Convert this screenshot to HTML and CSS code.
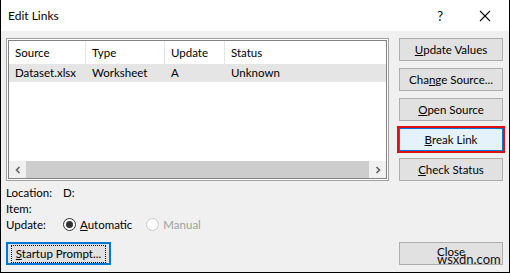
FILE: index.html
```html
<!DOCTYPE html>
<html lang="en">
<head>
  <meta charset="UTF-8">
  <title>Edit Links</title>
  <link rel="stylesheet" href="styles.css">
</head>
<body>
  <div class="dialog">
    <div class="titleBar">
      <span class="title">Edit Links</span>
      <span class="help">?</span>
      <svg class="closeX" width="12" height="12" viewBox="0 0 12 12">
        <path d="M1 1 L11 11 M11 1 L1 11" stroke="#000" stroke-width="1.1" fill="none"/>
      </svg>
    </div>

    <div class="content">
      <div class="topRow">
        <div class="linkList">
          <div class="listInner">
            <div class="listHeader">
              <div class="col colSource">Source</div>
              <div class="col colType">Type</div>
              <div class="col colUpdate">Update</div>
              <div class="col colStatus">Status</div>
            </div>
            <div class="listRow">
              <div class="col colSource">Dataset.xlsx</div>
              <div class="col colType">Worksheet</div>
              <div class="col colUpdate">A</div>
              <div class="col colStatus">Unknown</div>
            </div>
            <div class="listEmpty"></div>
            <div class="hScroll">
              <div class="arrow">
                <svg width="8" height="8" viewBox="0 0 8 8"><path d="M5.5 1 L2.5 4 L5.5 7" stroke="#606060" stroke-width="1.6" fill="none"/></svg>
              </div>
              <div class="thumb"></div>
              <div class="arrow">
                <svg width="8" height="8" viewBox="0 0 8 8"><path d="M2.5 1 L5.5 4 L2.5 7" stroke="#606060" stroke-width="1.6" fill="none"/></svg>
              </div>
            </div>
          </div>
        </div>

        <div class="sideButtons">
          <button class="btn"><u>U</u>pdate Values</button>
          <button class="btn">Cha<u>n</u>ge Source...</button>
          <button class="btn"><u>O</u>pen Source</button>
          <button class="btn btnHot"><u>B</u>reak Link</button>
          <button class="btn"><u>C</u>heck Status</button>
        </div>
      </div>

      <div class="info">
        <div class="infoLine"><span class="label">Location:</span><span>D:</span></div>
        <div class="infoLine"><span class="label">Item:</span></div>
        <div class="infoLine">
          <span class="label">Update:</span>
          <span class="radio on"></span><span class="radioText"><u>A</u>utomatic</span>
          <span class="radio off"></span><span class="radioText disabled">Manual</span>
        </div>
      </div>

      <div class="bottomRow">
        <button class="btn btnFocus"><span class="focusRect"><u>S</u>tartup Prompt...</span></button>
        <button class="btn btnClose"><span class="closeText">Close</span><span class="watermark">wsxdn.com</span></button>
      </div>
    </div>
  </div>
</body>
</html>
```

FILE: styles.css
```css
body {
  margin: 0;
  font-family: Lato, "Noto Sans", sans-serif;
  font-size: 11.5px;
  color: #000;
}

.dialog {
  width: 510px;
  height: 273px;
  box-sizing: border-box;
  border: 1px solid #000;
  border-top: none;
  background: #f0f0f0;
  display: flex;
  flex-direction: column;
}

.titleBar {
  height: 31px;
  background: #fff;
  display: flex;
  align-items: center;
  padding-left: 7px;
  font-size: 12px;
}

.title {
  flex: 1;
}

.help {
  margin-right: 36px;
  font-size: 13px;
}

.closeX {
  margin-right: 18px;
}

.content {
  flex: 1;
  padding: 7px 6px 0 5px;
  display: flex;
  flex-direction: column;
}

.topRow {
  display: flex;
  gap: 10px;
}

.linkList {
  width: 384px;
  height: 143px;
  box-sizing: border-box;
  border: 1px solid #a0a0a0;
  padding: 1px;
  background: #fff;
}

.listInner {
  height: 100%;
  box-sizing: border-box;
  border: 1px solid #828282;
  display: flex;
  flex-direction: column;
}

.listHeader,
.listRow {
  display: flex;
}

.listHeader {
  height: 23px;
  align-items: center;
}

.listHeader .col {
  height: 23px;
  line-height: 23px;
  border-right: 1px solid #e5e5e5;
}

.listHeader .colStatus {
  border-right: none;
}

.listRow {
  height: 18px;
  line-height: 18px;
  background: #e5e5e5;
}

.col {
  box-sizing: border-box;
  padding-left: 6px;
  white-space: nowrap;
}

.colSource { width: 77px; }
.colType { width: 79px; }
.colUpdate { width: 60px; }
.colStatus { flex: 1; }

.listEmpty {
  flex: 1;
}

.hScroll {
  height: 17px;
  display: flex;
  background: #f0f0f0;
}

.hScroll .arrow {
  width: 17px;
  display: flex;
  align-items: center;
  justify-content: center;
}

.hScroll .thumb {
  flex: 1;
  background: #cdcdcd;
}

.sideButtons {
  display: flex;
  flex-direction: column;
  gap: 7px;
}

.btn {
  font-family: inherit;
  font-size: 11.5px;
  color: #000;
  width: 104px;
  height: 23px;
  padding: 0;
  background: #e1e1e1;
  border: 1px solid #adadad;
  box-sizing: border-box;
  display: flex;
  align-items: center;
  justify-content: center;
  white-space: nowrap;
}

.btnHot {
  background: #e5f1fb;
  border: 1px solid #0078d7;
  outline: 2px solid #e01010;
}

.info {
  padding-top: 3px;
  display: flex;
  flex-direction: column;
}

.infoLine {
  height: 16px;
  display: flex;
  align-items: center;
}

.label {
  width: 57px;
}

.radio {
  width: 13px;
  height: 13px;
  box-sizing: border-box;
  border-radius: 50%;
  margin-right: 4px;
  background: #fff;
  position: relative;
}

.radio.on {
  border: 1px solid #333;
}

.radio.on::after {
  content: "";
  position: absolute;
  left: 2px;
  top: 2px;
  width: 7px;
  height: 7px;
  border-radius: 50%;
  background: #333;
}

.radio.off {
  border: 1px solid #cccccc;
}

.radioText {
  margin-right: 14px;
}

.disabled {
  color: #a0a0a0;
}

.bottomRow {
  margin-top: auto;
  margin-bottom: 7px;
  display: flex;
  justify-content: space-between;
}

.btnFocus {
  width: 105px;
  border: 2px solid #0078d7;
  background: #e1e1e1;
}

.focusRect {
  border: 1px dotted #000;
  padding: 1px 4px;
  line-height: 14px;
}

.btnClose {
  position: relative;
  align-items: flex-start;
  padding-top: 2px;
}

.watermark {
  position: absolute;
  left: 37px;
  top: 8px;
  font-size: 13px;
  color: #111;
}
```
